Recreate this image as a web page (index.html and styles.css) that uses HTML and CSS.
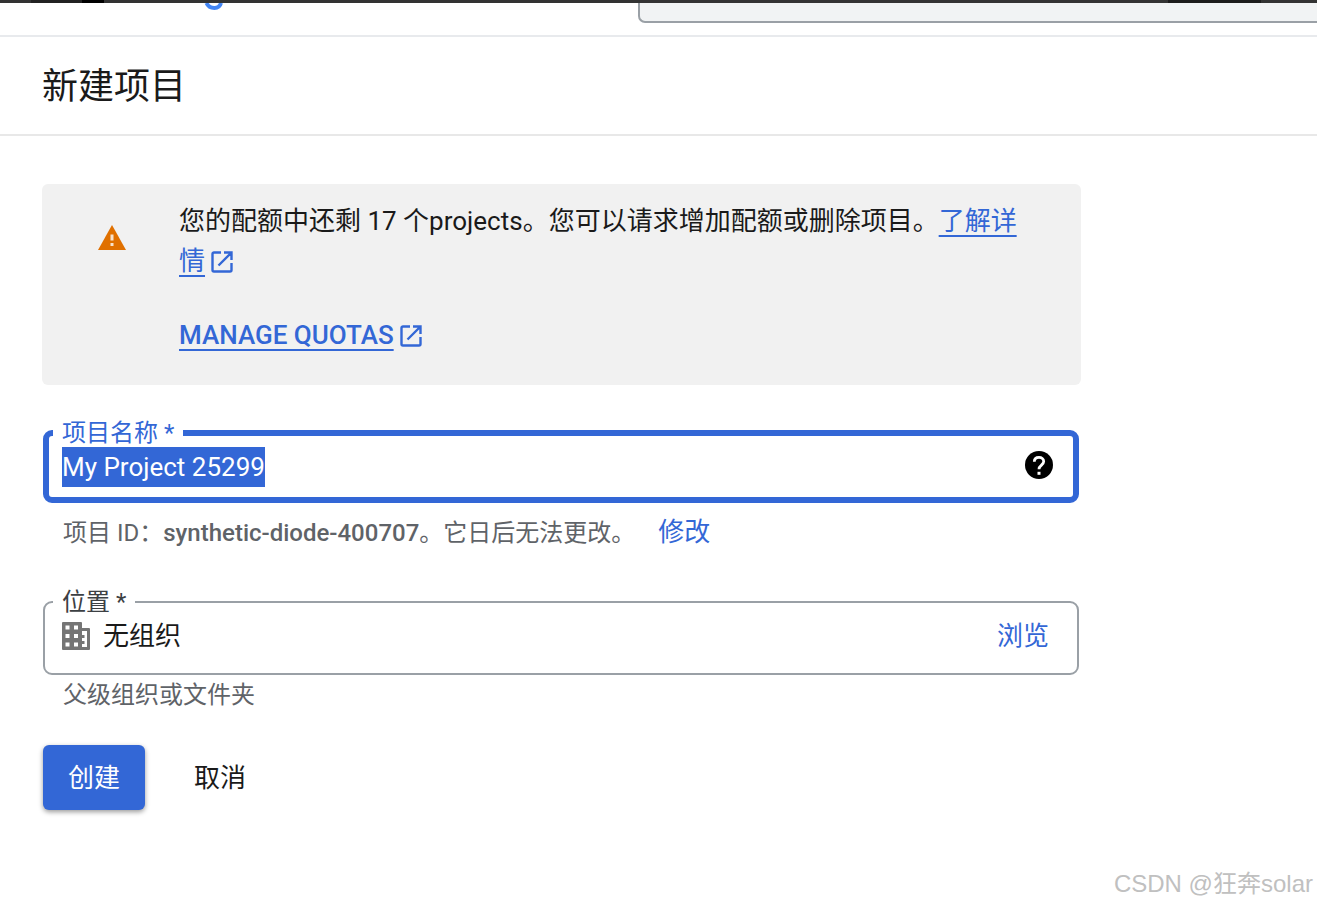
FILE: index.html
```html
<!DOCTYPE html>
<html lang="zh-CN">
<head>
<meta charset="utf-8">
<title>新建项目</title>
<link rel="stylesheet" href="styles.css">
</head>
<body>
<div class="window-edge"></div>
<header class="topbar">
  <svg class="logo" width="20" height="9" viewBox="0 0 20 9" aria-hidden="true"><path d="M2.500 0C4 3.500 7 5 10.500 5S16 3.500 17 0" fill="none" stroke="#4285f4" stroke-width="4"/></svg>
  <input class="search" type="search" aria-label="搜索">
</header>
<div class="title-bar"><h1 class="title">新建项目</h1></div>
<main class="content">
  <section class="banner">
    <svg class="warning" width="28" height="25" viewBox="0 0 28 25" aria-hidden="true"><path d="M14 0 28 25H0Z" fill="#e07000"/><path d="M12.500 9.500h3v6h-3zM12.500 18h3v3h-3z" fill="#f8e3ce"/></svg>
    <div class="banner-body">
      <p class="message">您的配额中还剩 17 个projects。您可以请求增加配额或删除项目。<a class="link" href="#learn">了解详情</a><svg class="external" width="22" height="22" viewBox="0 0 22 22" aria-hidden="true"><path d="M10 1.500H3a1.500 1.500 0 0 0-1.500 1.500v16A1.500 1.500 0 0 0 3 20.500h16a1.500 1.500 0 0 0 1.500-1.500v-7M13 1.500h7.500V9M20 2 7.500 14.500" fill="none" stroke="currentColor" stroke-width="2.400"/></svg></p>
      <p class="quotas"><a class="link" href="#quotas">MANAGE QUOTAS</a><svg class="external" width="22" height="22" viewBox="0 0 22 22" aria-hidden="true"><path d="M10 1.500H3a1.500 1.500 0 0 0-1.500 1.500v16A1.500 1.500 0 0 0 3 20.500h16a1.500 1.500 0 0 0 1.500-1.500v-7M13 1.500h7.500V9M20 2 7.500 14.500" fill="none" stroke="currentColor" stroke-width="2.400"/></svg></p>
    </div>
  </section>
  <form class="form">
    <fieldset class="field field-active">
      <legend class="legend"><label for="name">项目名称 *</label></legend>
      <div class="row">
        <input class="name" id="name" type="text" value="My Project 25299" spellcheck="false" autocomplete="off">
        <button class="help" type="button" aria-label="帮助"><svg width="28" height="28" viewBox="0 0 28 28" aria-hidden="true"><circle cx="14" cy="14" r="14"/><path d="M9.300 10.800C9.300 7.800 11.400 6.400 14 6.400s4.700 1.600 4.700 4.200c0 3.400-4.700 3.700-4.700 7.600" fill="none" stroke="#fff" stroke-width="2.800"/><path d="M12.500 20.800h3v3h-3z" fill="#fff"/></svg></button>
      </div>
    </fieldset>
    <p class="hint hint-id">项目 ID：<strong class="id">synthetic-diode-400707</strong>。它日后无法更改。<button class="text-button edit" type="button">修改</button></p>
    <fieldset class="field">
      <legend class="legend">位置 *</legend>
      <div class="row">
        <svg class="org" width="28" height="28" viewBox="0 0 28 28" aria-hidden="true"><path d="M1 0h18q1 0 1 1v5h7q1 0 1 1v20q0 1-1 1H1q-1 0-1-1V1q0-1 1-1z" fill="#757575"/><path d="M3.500 3.500h4v4h-4zM12 3.500h4v4h-4zM3.500 12h4v4h-4zM12 12h4v4h-4zM3.500 20.500h4v4h-4zM12 20.500h4v4h-4zM20 9h5v16h-5v-3h2.500v-3H20v-3h2.500v-3H20z" fill="#fff"/></svg>
        <span class="place">无组织</span>
        <button class="text-button browse" type="button">浏览</button>
      </div>
    </fieldset>
    <p class="hint">父级组织或文件夹</p>
    <div class="actions">
      <button class="create" type="submit">创建</button>
      <button class="cancel" type="button">取消</button>
    </div>
  </form>
</main>
<div class="watermark">CSDN @狂奔solar</div>
<script src="main.js"></script>
</body>
</html>
```
FILE: styles.css
```css
* { box-sizing: border-box; }
body {
  margin: 0;
  min-height: 100vh;
  position: relative;
  background: #fff;
  color: #1a1a1a;
  font: 26px/40px Roboto, "Noto Sans CJK SC", sans-serif;
}
h1, p { margin: 0; }
button, input { font: inherit; color: inherit; border: 0; padding: 0; background: none; }
button { cursor: pointer; }
.window-edge {
  height: 3px;
  background: linear-gradient(90deg, #333 31px, #222 31px 82px, #000 82px 104px, #333 104px 1168px, #1c1c1c 1168px 1261px, #333 1261px);
}
.topbar {
  display: flex;
  align-items: flex-start;
  height: 34px;
  padding-left: 204px;
  border-bottom: 2px solid #e8eaed;
}
.logo { flex: none; }
.search {
  flex: 1;
  height: 20px;
  margin-left: 414px;
  background: #f1f3f4;
  border: 2px solid #9aa0a6;
  border-width: 0 0 2px 2px;
  border-radius: 0 0 0 7px;
}
.title-bar { padding: 26px 42px 22px; border-bottom: 2px solid #e8e8e8; }
.title { font-size: 36px; line-height: 49px; font-weight: 400; }
.content { max-width: 1123px; padding: 48px 42px 0; }
.banner {
  display: flex;
  gap: 53px;
  padding: 17px 50px 30px 56px;
  background: #f1f1f1;
  border-radius: 6px;
}
.warning { flex: none; margin-top: 24px; }
.banner-body { flex: 1; }
.quotas { margin-top: 34px; font-weight: 500; }
.link {
  color: #3367d6;
  text-decoration: underline;
  text-decoration-thickness: 2px;
  text-underline-offset: 5px;
}
.external { color: #3367d6; margin-left: 6px; vertical-align: -3px; }
.form { padding: 36px 2px 0 1px; }
.field {
  min-width: 0;
  margin: 0;
  padding: 2px 28px 17px 8px;
  border: 2px solid #9aa0a6;
  border-radius: 9px;
}
.field-active { padding: 2px 20px 10px 4px; border: 6px solid #3367d6; }
.legend { padding: 0 9px; font-size: 24px; line-height: 24px; color: #3c4043; }
.field-active .legend { color: #3367d6; }
.row { display: flex; align-items: center; height: 40px; padding-left: 9px; }
.name { flex: 1; min-width: 0; height: 40px; line-height: 40px; outline: 0; }
.name::selection { background: #3367d6; color: #fff; }
.help { display: flex; margin-bottom: 4px; }
.hint { padding-left: 20px; font-size: 24px; line-height: 40px; color: #5f6368; }
.hint-id { margin: 9px 0 37px; }
.id { font-weight: 500; }
.text-button { color: #3367d6; font-size: 26px; }
.edit { margin-left: 23px; }
.place { margin-left: 13px; }
.browse { margin-left: auto; }
.actions { display: flex; gap: 24px; margin-top: 30px; }
.create, .cancel { height: 65px; padding: 0 25px; border-radius: 6px; }
.create { background: #3367d6; color: #fff; box-shadow: 0 2px 5px rgba(0, 0, 0, 0.4); }
.watermark {
  position: absolute;
  right: 4px;
  bottom: 2px;
  color: #c0c0c0;
  font: 24px/40px "Liberation Sans", "Noto Sans CJK SC", sans-serif;
}
```
FILE: main.js
```js
const nameInput = document.getElementById('name');
nameInput.focus();
nameInput.select();
```
